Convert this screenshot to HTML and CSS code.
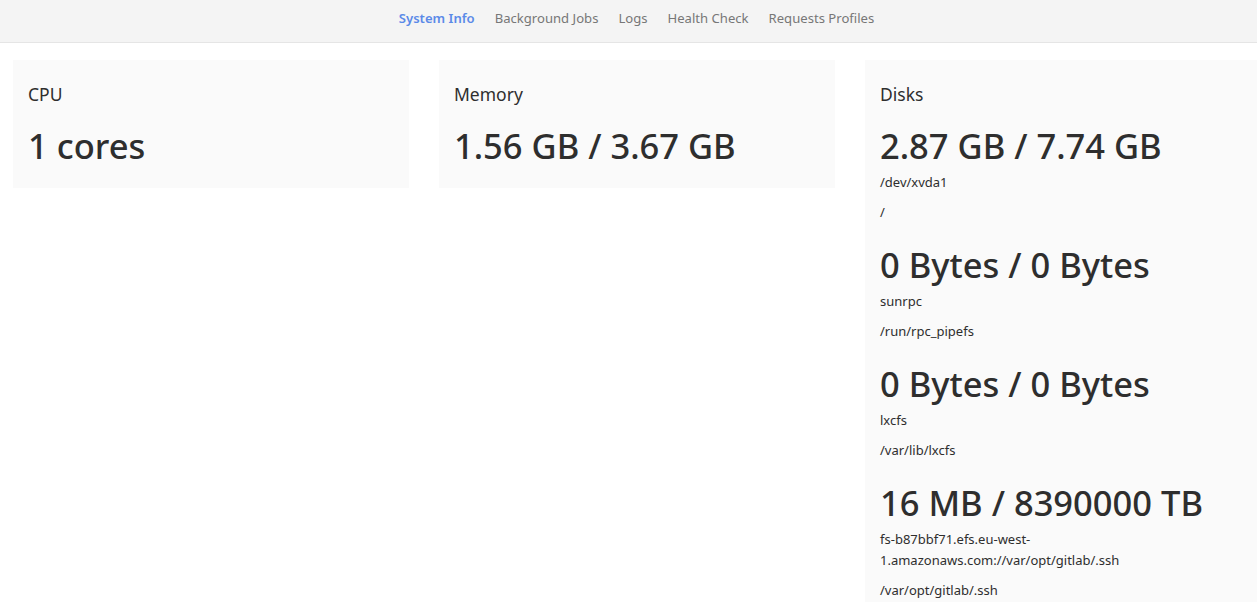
FILE: index.html
```html
<!DOCTYPE html>
<html>
<head>
<meta charset="utf-8">
<link rel="stylesheet" href="styles.css">
</head>
<body>
<header class="topnav">
  <nav class="tabs">
    <a class="tab active">System Info</a>
    <a class="tab">Background Jobs</a>
    <a class="tab">Logs</a>
    <a class="tab">Health Check</a>
    <a class="tab">Requests Profiles</a>
  </nav>
</header>
<main class="grid">
  <section class="card">
    <h4 class="card-title">CPU</h4>
    <h1 class="stat">1 cores</h1>
  </section>
  <section class="card">
    <h4 class="card-title">Memory</h4>
    <h1 class="stat">1.56 GB / 3.67 GB</h1>
  </section>
  <section class="card">
    <h4 class="card-title">Disks</h4>
    <div class="disk">
      <h1 class="stat">2.87 GB / 7.74 GB</h1>
      <p class="meta">/dev/xvda1</p>
      <p class="meta">/</p>
    </div>
    <div class="disk">
      <h1 class="stat">0 Bytes / 0 Bytes</h1>
      <p class="meta">sunrpc</p>
      <p class="meta">/run/rpc_pipefs</p>
    </div>
    <div class="disk">
      <h1 class="stat">0 Bytes / 0 Bytes</h1>
      <p class="meta">lxcfs</p>
      <p class="meta">/var/lib/lxcfs</p>
    </div>
    <div class="disk">
      <h1 class="stat">16 MB / 8390000 TB</h1>
      <p class="meta">fs-b87bbf71.efs.eu-west-1.amazonaws.com://var/opt/gitlab/.ssh</p>
      <p class="meta">/var/opt/gitlab/.ssh</p>
    </div>
  </section>
</main>
</body>
</html>
```
FILE: styles.css
```css
html, body {
  margin: 0;
  padding: 0;
}
body {
  font-family: "Noto Sans", "Open Sans", sans-serif;
  color: #2e2e2e;
  background: #fff;
  font-size: 13px;
  overflow: hidden;
}
.topnav {
  background: #f4f4f4;
  border-bottom: 1px solid #e5e5e5;
  height: 43px;
  box-sizing: border-box;
  padding: 0 0 6px 16px;
  display: flex;
  justify-content: center;
  align-items: center;
}
.tabs {
  display: flex;
  gap: 20px;
  font-size: 13.1px;
}
.tab {
  color: #777;
  text-decoration: none;
}
.tab.active {
  color: #5b8ae8;
  font-weight: 600;
}
.grid {
  display: grid;
  grid-template-columns: 396px 396px 396px;
  column-gap: 30px;
  padding: 17px 0 0 13px;
  align-items: start;
}
.card {
  background: #fafafa;
  padding: 12px 15px 12px;
}
.card-title {
  font-size: 17.5px;
  font-weight: 400;
  margin: 10px 0 10px;
  line-height: 24px;
  color: #2e2e2e;
}
.stat {
  font-size: 34.5px;
  font-weight: 500;
  line-height: 40px;
  margin: 20px 0 10px;
  color: #2e2e2e;
}
.meta {
  margin: 0 0 9px;
  line-height: 21px;
  font-size: 13px;
  color: #2e2e2e;
}
.disk .stat {
  margin-bottom: 6px;
}
.disk + .disk .stat {
  margin-top: 22px;
}
```
